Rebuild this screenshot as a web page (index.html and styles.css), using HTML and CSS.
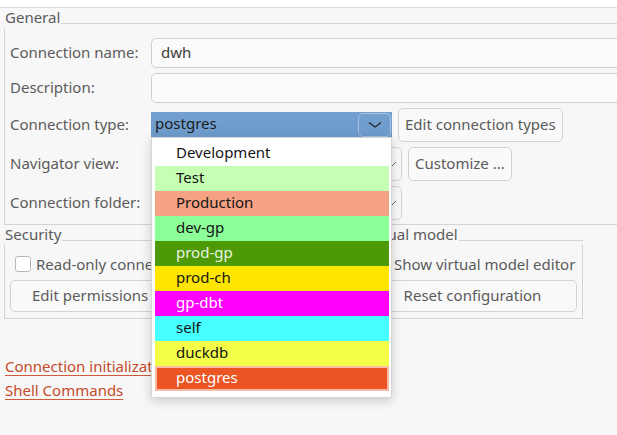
FILE: index.html
```html
<!DOCTYPE html>
<html>
<head>
<meta charset="utf-8">
<link rel="stylesheet" href="styles.css">
</head>
<body>
<div class="topbar"></div>
<div class="page">
  <section class="group general">
    <div class="group-head"><span class="legend">General</span><span class="rule"></span></div>
    <div class="group-body form">
      <span class="lbl">Connection name:</span>
      <div class="input">dwh</div>
      <span class="lbl">Description:</span>
      <div class="input"></div>
      <span class="lbl">Connection type:</span>
      <div class="field-row">
        <div class="combo combo-active">
          <span class="combo-text">postgres</span>
          <span class="combo-btn"><svg width="14" height="8" viewBox="0 0 14 8"><path d="M1 1.5 L7 6 L13 1.5" fill="none" stroke="#222" stroke-width="1.2"/></svg></span>
        </div>
        <button class="btn">Edit connection types</button>
      </div>
      <span class="lbl">Navigator view:</span>
      <div class="field-row">
        <div class="combo combo-plain"><span class="combo-text"></span><svg class="chev" width="10" height="6" viewBox="0 0 10 6"><path d="M1 1 L5 5 L9 1" fill="none" stroke="#666" stroke-width="1"/></svg></div>
        <button class="btn">Customize ...</button>
      </div>
      <span class="lbl">Connection folder:</span>
      <div class="field-row">
        <div class="combo combo-plain"><span class="combo-text"></span><svg class="chev" width="10" height="6" viewBox="0 0 10 6"><path d="M1 1 L5 5 L9 1" fill="none" stroke="#666" stroke-width="1"/></svg></div>
      </div>
    </div>
  </section>

  <div class="group-row">
    <section class="group security">
      <div class="group-head"><span class="legend">Security</span><span class="rule"></span></div>
      <div class="group-body stack">
        <label class="check-row clip"><span class="checkbox"></span><span>Read-only connection</span></label>
        <button class="btn btn-tall">Edit permissions</button>
      </div>
    </section>
    <section class="group vmodel">
      <div class="group-head"><span class="legend">Virtual model</span><span class="rule"></span></div>
      <div class="group-body stack">
        <label class="check-row"><span class="checkbox"></span><span>Show virtual model editor</span></label>
        <button class="btn btn-tall btn-full">Reset configuration</button>
      </div>
    </section>
  </div>

  <div class="links">
    <a class="link" href="#">Connection initialization settings</a>
    <a class="link" href="#">Shell Commands</a>
  </div>
</div>

<div class="popup">
  <div class="item">Development</div>
  <div class="item c-test">Test</div>
  <div class="item c-prod">Production</div>
  <div class="item c-devgp">dev-gp</div>
  <div class="item c-prodgp">prod-gp</div>
  <div class="item c-prodch">prod-ch</div>
  <div class="item c-gpdbt">gp-dbt</div>
  <div class="item c-self">self</div>
  <div class="item c-duck">duckdb</div>
  <div class="item c-pg selected">postgres</div>
</div>
</body>
</html>
```

FILE: styles.css
```css
html, body {
  margin: 0;
  padding: 0;
}
body {
  width: 617px;
  height: 435px;
  overflow: hidden;
  position: relative;
  background: #f7f7f7;
  font-family: "Noto Sans", "Open Sans", sans-serif;
  font-size: 15px;
  color: #5b5b5b;
}
.topbar {
  height: 7px;
  background: #ffffff;
  border-bottom: 1px solid #dedede;
}
.page {
  padding-left: 4px;
  width: 680px;
}
.group-head {
  display: flex;
  align-items: flex-start;
  height: 20px;
}
.legend {
  line-height: 19px;
  padding-left: 1px;
  margin-right: 1px;
  white-space: nowrap;
}
.rule {
  flex: 1;
  border-top: 1px solid #d4d4d4;
  margin-top: 15px;
}
.group-body {
  border: 1px solid #d4d4d4;
  border-top: none;
}
.form {
  display: grid;
  grid-template-columns: 141px 1fr;
  row-gap: 5px;
  align-items: center;
  padding: 10px 0 4px 5px;
}
.lbl {
  white-space: nowrap;
  line-height: 18px;
  margin-top: -2px;
}
.input {
  height: 30px;
  box-sizing: border-box;
  border: 1px solid #cfcfcf;
  border-radius: 5px;
  background: #fbfbfb;
  padding-left: 9px;
  line-height: 26px;
  color: #3a3a3a;
}
.field-row {
  display: flex;
  align-items: center;
  gap: 6px;
  height: 34px;
}
.btn {
  font: inherit;
  color: #5b5b5b;
  height: 34px;
  box-sizing: border-box;
  border: 1px solid #d2d2d2;
  border-radius: 5px;
  background: #f9f9f9;
  padding: 0 6px 2px;
  white-space: nowrap;
}
.combo {
  box-sizing: border-box;
  display: flex;
  align-items: center;
}
.combo-active {
  width: 241px;
  height: 26px;
  background: linear-gradient(#74a0d0, #6e9bcc);
  border-bottom: 1px solid #5d86b4;
  padding: 0 1px 0 4px;
}
.combo-text {
  flex: 1;
  color: #1c1c1c;
  line-height: 18px;
  margin-top: -3px;
}
.combo-btn {
  width: 33px;
  height: 24px;
  box-sizing: border-box;
  border: 1px solid #a5c0e0;
  border-radius: 5px;
  display: flex;
  align-items: center;
  justify-content: center;
}
.combo-plain {
  width: 251px;
  height: 34px;
  border: 1px solid #d2d2d2;
  border-radius: 5px;
  background: #f9f9f9;
  padding: 0 4px 0 9px;
}
.group-row {
  display: grid;
  grid-template-columns: 352px 221px;
  column-gap: 6px;
  width: 579px;
}
.stack {
  display: flex;
  flex-direction: column;
  align-items: flex-start;
  padding: 6px 5px 6px 5px;
}
.check-row {
  display: flex;
  align-items: center;
  gap: 5px;
  height: 26px;
  margin-left: 5px;
  white-space: nowrap;
}
.clip {
  max-width: 137px;
  overflow: hidden;
}
.checkbox {
  flex: none;
  width: 16px;
  height: 16px;
  box-sizing: border-box;
  border: 1px solid #b9b9b9;
  border-radius: 3px;
  background: #ffffff;
}
.btn-tall {
  height: 32px;
  margin-top: 3px;
  padding: 0 21px 2px;
}
.btn-full {
  align-self: stretch;
}
.links {
  display: flex;
  flex-direction: column;
  align-items: flex-start;
  margin-top: 35px;
  padding-left: 1px;
  width: 146px;
  overflow: hidden;
}
.link {
  line-height: 24px;
  color: #c54a28;
  text-decoration: underline;
  text-decoration-color: #cf5a3a;
  text-underline-offset: 3px;
  white-space: nowrap;
}
.popup {
  position: absolute;
  left: 151px;
  top: 137px;
  width: 241px;
  box-sizing: border-box;
  background: #ffffff;
  border: 1px solid #d6d6d6;
  box-shadow: 0 3px 10px rgba(0, 0, 0, 0.18);
  padding: 3px 2px 6px 3px;
}
.item {
  height: 25px;
  line-height: 23px;
  padding-left: 21px;
  color: #141414;
}
.c-test { background: #c4ffb3; }
.c-prod { background: #f5a184; }
.c-devgp { background: #8cff98; }
.c-prodgp { background: #4e9a06; color: #e8f5e0; }
.c-prodch { background: #ffe600; }
.c-gpdbt { background: #ff00ff; color: #ffffff; }
.c-self { background: #46ffff; }
.c-duck { background: #f4fd48; }
.c-pg { background: #eb5523; color: #ffffff; }
.selected {
  box-shadow: inset 0 0 0 2px #f7bba6;
}
```
